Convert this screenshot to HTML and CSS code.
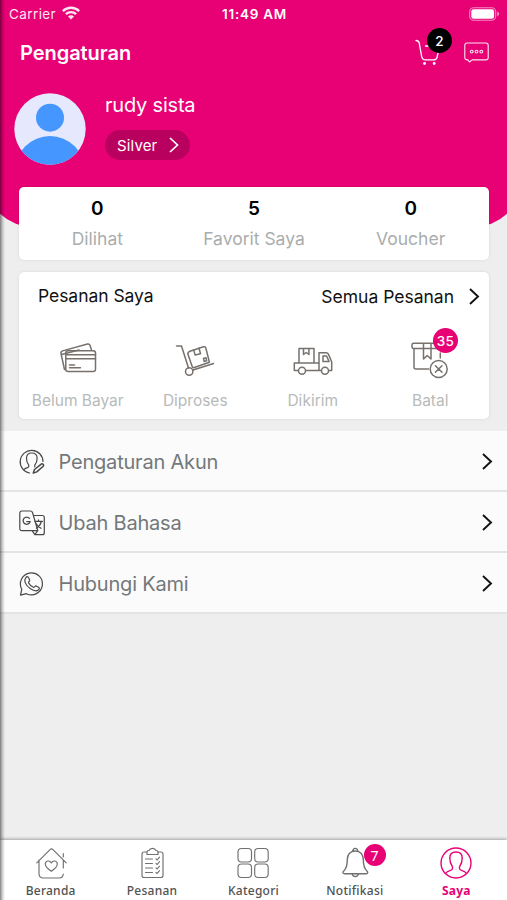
FILE: index.html
```html
<!DOCTYPE html>
<html lang="id">
<head>
<meta charset="utf-8">
<meta name="viewport" content="width=device-width">
<title>Pengaturan</title>
<link rel="stylesheet" href="styles.css">
</head>
<body>
<div class="app">
  <header class="hero">
    <div class="status">
      <div class="carrier"><span>Carrier</span>
        <svg width="18" height="14" viewBox="0 0 18 14"><g fill="none" stroke="#fff" stroke-width="2.4"><path d="M.8 5.1a11.6 11.6 0 0 1 16.4 0"/><path d="M3.9 8.2a7.2 7.2 0 0 1 10.2 0"/></g><path d="M6 10.5a4.2 4.2 0 0 1 6 0L9 13.6z" fill="#fff"/></svg>
      </div>
      <div class="clock">11:49 AM</div>
      <svg class="battery" width="31" height="14" viewBox="0 0 31 14"><rect x=".7" y=".7" width="26" height="12.6" rx="4" fill="none" stroke="#fff" stroke-opacity=".55" stroke-width="1.1"/><rect x="2.3" y="2.3" width="22.8" height="9.4" rx="2.3" fill="#fff"/><path d="M28.3 4.6c2.4 1 2.4 3.8 0 4.8z" fill="#fff" opacity=".6"/></svg>
    </div>
    <div class="titlebar">
      <h1>Pengaturan</h1>
      <div class="tools">
        <div class="cart">
          <svg width="26" height="28" viewBox="0 0 26 28" fill="none" stroke="#fff" stroke-width="1.3" stroke-linecap="round"><path d="M1 1.5c2 0 2.700.7 3.200 2.400l2.500 13.800c.5 2.100 1.500 3.200 3.400 3.200h8.600c2 0 2.800-.8 3.400-2.700L24.500 7M10.500 7h8"/><circle cx="9.5" cy="24.500" r="1.4" fill="#fff" stroke="none"/><circle cx="19.200" cy="24.500" r="1.4" fill="#fff" stroke="none"/></svg>
          <span class="badge badge-dark">2</span>
        </div>
        <svg width="25" height="22" viewBox="0 0 25 22" fill="none" stroke="#fff" stroke-width="1.1" stroke-opacity=".9"><path d="M3.200 1h18.600q2.400 0 2.400 2.400v12.100q0 2.400-2.400 2.400H8.200L5.700 20l-2-2.100Q.8 17.900.8 15.500V3.400Q.8 1 3.200 1z"/><circle cx="7.7" cy="9.6" r="1.4"/><circle cx="12.5" cy="9.6" r="1.4"/><circle cx="17.3" cy="9.6" r="1.4"/></svg>
      </div>
    </div>
    <div class="profile">
      <svg width="72" height="72" viewBox="0 0 72 72"><defs><clipPath id="face"><circle cx="36" cy="36" r="35.7"/></clipPath></defs><g clip-path="url(#face)"><path fill="#e6e9fd" d="M0 0h72v72H0z"/><circle cx="36" cy="24.7" r="14" fill="#4597ff"/><circle cx="36" cy="78" r="35" fill="#4597ff"/></g></svg>
      <div>
        <div class="name">rudy sista</div>
        <div class="tier"><span>Silver</span><svg width="10" height="16" viewBox="0 0 10 16" fill="none" stroke="#fff" stroke-width="1.7"><path d="m1 1 7.500 7L1 15"/></svg></div>
      </div>
    </div>
  </header>

  <main>
    <section class="card stats">
      <div><b>0</b><span>Dilihat</span></div>
      <div><b>5</b><span>Favorit Saya</span></div>
      <div><b>0</b><span>Voucher</span></div>
    </section>

    <section class="card orders">
      <div class="orders-head">
        <h2>Pesanan Saya</h2>
        <div class="all"><span>Semua Pesanan</span><svg width="11" height="17" viewBox="0 0 11 17" fill="none" stroke="#111" stroke-width="1.9"><path d="m1 1 8 7.500-8 7.500"/></svg></div>
      </div>
      <div class="steps">
        <div class="step">
          <svg width="40" height="40" viewBox="0 0 40 40"><path d="m6.500 27.500-3.500-16q-.4-2 1.600-2.600L29.500 2q2-.4 2.600 1.500L33.500 8M3.500 12.500 21 8"/><rect x="7.800" y="8.700" width="29.700" height="20.800" rx="2.300"/><path d="M8 12.700h29.500M8 16.700h29.500M11.500 23h5M11.500 25.700h11"/></svg>
          <span>Belum Bayar</span>
        </div>
        <div class="step">
          <svg width="40" height="40" viewBox="0 0 40 40"><path d="M1.500 4h5l7 22M18 28l20.500-6.500"/><circle cx="14.200" cy="29.500" r="3.700"/><path d="m12.700 11.500 1.500-2L28.500 4.800q2-.5 2.400 1.400l3.500 14-15.800 5.500q-1 0-1.500-1.400z"/><path d="m18.700 8.100 1.500 5 5.300-1.400L24 6.200M28.500 16.500l2.500-.7.700 3-2.500.7z"/></svg>
          <span>Diproses</span>
        </div>
        <div class="step">
          <svg width="40" height="40" viewBox="0 0 40 40"><path d="M6 20.500V6.500h15v14M10.500 6.500v6l2.700-2 2.700 2v-6M5 28.500H1.300V21H26V10.700h7q1.800 0 2.500 1.700l3.200 7.400v8.700H36M26 21v7.500M13 28.500h15"/><path d="M30 14h3.600l2.500 5.600H30z"/><circle cx="9" cy="28.700" r="3.500"/><circle cx="32" cy="28.700" r="3.500"/></svg>
          <span>Dikirim</span>
        </div>
        <div class="step">
          <svg width="40" height="40" viewBox="0 0 40 40"><path d="M4 6.500h-.5Q2 6.500 2 5V2.700q0-1.500 1.500-1.500h26v5.300zM4 6.500V25q0 2 2 2h12.500M13.500 1.500V17l3.700-3.500L21 17V1.500M30.300 11v5"/><circle cx="28.700" cy="27" r="8.500"/><path d="m25.400 23.700 6.600 6.600m0-6.600-6.600 6.600"/></svg>
          <i class="badge badge-count">35</i>
          <span>Batal</span>
        </div>
      </div>
    </section>

    <nav class="menu">
      <div class="row">
        <svg class="ico" width="26" height="26" viewBox="0 0 26 26"><path d="M15.500 20.500l-1.200 3.600 3.500-1.200 6.400-5.700q.8-1.200-.3-2.100-1.100-.7-2 .2z" stroke-width="1.5"/><path d="M24 12.500A11.400 11.400 0 1 0 10.600 24M5 20.400q1.300-1.200 3.500-1.800c1.600-.5 1.600-2 .9-3.200C7.900 13.600 7.500 11.800 7.500 9.200c0-3.200 2.200-5.200 5.300-5.200s5.300 2 5.300 5.200c0 2.600-.4 4.400-1.900 6.200-.6 1-.8 1.800-.4 2.400"/></svg>
        <span>Pengaturan Akun</span>
        <svg class="chev" width="11" height="17" viewBox="0 0 11 17"><path d="m1 1 8 7.500-8 7.500"/></svg>
      </div>
      <div class="row">
        <svg class="ico" width="26" height="26" viewBox="0 0 26 26"><path d="M3 1h8.500q1.500 0 2 1.500l5.300 18.200H3Q.8 20.700.8 18.500V3.200Q.8 1 3 1zM14.400 5.500h8.900q2 0 2 2v15.200q0 2-2 2h-7.500l-2.700-4M15.800 24.700l3-4"/><path d="M10.500 8.400a3.600 3.600 0 1 0 .7 3.200H7.800" stroke-width="1.3"/><path d="M15.800 11.300h7.700M19.500 10v1.300M22.300 11.600c-.7 3-2.200 5-4.800 6.500M17 13.500c1 2 2.600 3.500 5 4.800" stroke-width="1.3"/></svg>
        <span>Ubah Bahasa</span>
        <svg class="chev" width="11" height="17" viewBox="0 0 11 17"><path d="m1 1 8 7.500-8 7.500"/></svg>
      </div>
      <div class="row">
        <svg class="ico" width="26" height="26" viewBox="0 0 26 26"><path d="m1.500 24.200 1.300-6A11 11 0 1 1 7.500 22.700z"/><path d="M6.700 6.800c1-1.500 2.300-1.500 2.900 0l1.100 2.300c.5 1-1.600 1.800-1.200 2.700 1 2.100 2.700 3.600 4.900 4.500 1 .4 1.700-1.800 2.800-1.300l2.300 1.200c1.400.7.8 2.200-.2 2.900-2 1.400-4.900.6-7.800-1.300-2.600-1.700-4.400-3.800-5.300-6.200C5.500 9.500 5.700 8 6.700 6.800z"/></svg>
        <span>Hubungi Kami</span>
        <svg class="chev" width="11" height="17" viewBox="0 0 11 17"><path d="m1 1 8 7.500-8 7.500"/></svg>
      </div>
    </nav>
  </main>

  <footer class="tabs">
    <div class="tab">
      <svg width="34" height="34" viewBox="0 0 34 34"><path d="M5 14v13.500Q5 32 9.500 32H25q3.800 0 4.300-4M29.300 22V14M2.800 16.800 16 3.600q1.500-1.400 3 0l13.200 13.200M29.300 11V7.500"/><path d="M17.300 25.300c-3-2-6-4.300-6-7.200 0-3.600 4.600-4.200 6-1.200 1.400-3 6-2.400 6 1.200 0 2.900-3 5.200-6 7.200z"/></svg>
      <span>Beranda</span>
    </div>
    <div class="tab">
      <svg width="34" height="34" viewBox="0 0 34 34"><path d="M12 6H9Q7 6 7 8v21.500q0 2 2 2h17q2 0 2-2V8q0-2-2-2h-3"/><path d="M12 8.500V6q0-1.500 2-1.500.8-2.200 3.500-2.200T21 4.500q2 0 2 1.500v2.500zM10.500 13h7M10.500 17.500h7M10.500 22h7M10.500 26.500h7M21 12.800l1.200 1.200 2.300-2.800M21 17.300l1.200 1.200 2.300-2.800M21 21.800l1.200 1.200 2.300-2.800M21 26.300l1.200 1.200 2.300-2.800"/></svg>
      <span>Pesanan</span>
    </div>
    <div class="tab">
      <svg width="34" height="34" viewBox="0 0 34 34"><rect x="2" y="2.5" width="13.5" height="13.5" rx="3.5"/><rect x="18.7" y="2.5" width="13.5" height="13.5" rx="3.5"/><rect x="2" y="18" width="13.5" height="13.5" rx="3.5"/><rect x="18.7" y="18" width="13.5" height="13.5" rx="3.5"/></svg>
      <span>Kategori</span>
    </div>
    <div class="tab">
      <svg width="34" height="34" viewBox="0 0 34 34"><path d="M15 5.500a2.400 2.400 0 1 1 4.600 0M17.300 5c-5.300 0-8 4-8 8.500 0 6.500-.8 9-3.500 11.500-1.500 1.300-1 2.800.8 2.800h21.500c1.800 0 2.200-1.500.8-2.800-2.800-2.500-3.600-5-3.600-11.500 0-4.500-2.700-8.500-8-8.500zM14.200 28c.4 3.300 5.700 3.300 6.200 0" stroke-width="1.4"/></svg>
      <i class="badge badge-tab">7</i>
      <span>Notifikasi</span>
    </div>
    <div class="tab active">
      <svg width="34" height="34" viewBox="0 0 34 34"><circle cx="17" cy="17" r="15"/><path d="M6.500 27.500c1.200-2 3-2.600 5-3.200 2.200-.8 2.600-2.200 1.600-4.300-1.500-2-2.300-4.500-2.300-8C10.800 8 13 6 17 6s6.200 2 6.200 6c0 3.500-.8 6-2.300 8-1 2.100-.6 3.500 1.600 4.300 2 .6 3.800 1.200 5 3.200"/></svg>
      <span>Saya</span>
    </div>
  </footer>
</div>
</body>
</html>
```
FILE: styles.css
```css
* { box-sizing: border-box; }
body { margin: 0; font-family: Inter, "Liberation Sans", sans-serif; background: #eee; }
h1, h2 { margin: 0; }
svg { display: block; flex: none; }

.app {
  position: relative;
  height: 900px;
  overflow: hidden;
  display: flex;
  flex-direction: column;
  background: #eee;
}
/* soft shade along the left screen edge */
.app::after {
  content: "";
  position: absolute;
  inset: 0 auto 0 0;
  width: 5px;
  background: linear-gradient(90deg, rgba(0,0,0,.48), rgba(0,0,0,.18) 50%, transparent);
}

.hero {
  flex: none;
  height: 227px;
  margin: 0 -16px;
  padding: 0 16px;
  background: #e80075;
  border-radius: 0 0 50px 50px;
  color: #fff;
}
.status {
  display: grid;
  grid-template-columns: 1fr auto 1fr;
  align-items: center;
  height: 27px;
  padding: 0 7px 0 9px;
  font-size: 13.5px;
  line-height: 27px;
}
.carrier { display: flex; align-items: center; gap: 6px; letter-spacing: .4px; opacity: .9; }
.carrier span { padding-top: 1px; }
.carrier svg { margin-top: -2px; }
.clock { font-weight: 600; font-size: 13.5px; letter-spacing: .75px; padding-top: 1px; }
.battery { justify-self: end; }

.titlebar {
  display: flex;
  justify-content: space-between;
  height: 52px;
  padding: 0 18px 0 20px;
}
.titlebar h1 { font-size: 20px; font-weight: 600; line-height: 53px; letter-spacing: -.05px; }
.tools { display: flex; align-items: center; gap: 23px; }
.cart { position: relative; }
.badge {
  position: absolute;
  display: flex;
  align-items: center;
  justify-content: center;
  border-radius: 50%;
  color: #fff;
  font-style: normal;
}
.badge-dark { left: 12px; top: -11px; width: 25px; height: 25px; background: #000; font-size: 13.5px; font-weight: 500; }

.profile { display: flex; gap: 19px; padding: 14px 14px 0; }
.name { font-size: 20px; line-height: 25px; letter-spacing: -.2px; }
.tier {
  display: flex;
  align-items: center;
  gap: 12px;
  width: 85px;
  height: 30px;
  margin-top: 12px;
  padding-left: 12px;
  border-radius: 15px;
  background: #ba005f;
  font-size: 15px;
  letter-spacing: .15px;
}

main { flex: 1; margin-top: -40px; }
.card {
  margin: 0 18px 12px 19px;
  background: #fff;
  border-radius: 5px;
  box-shadow: 0 0 3px rgba(0,0,0,.1);
}
.stats { display: grid; grid-template-columns: repeat(3, 1fr); height: 73px; padding-top: 7px; text-align: center; }
.stats b { display: block; font-size: 19px; font-weight: 600; line-height: 29px; }
.stats span { display: block; font-size: 17.5px; line-height: 31px; color: #a9adad; }

.orders { height: 147px; }
.orders-head { display: flex; justify-content: space-between; align-items: center; height: 48px; padding: 0 9px 0 19px; color: #111; }
.orders-head h2 { font-size: 17.5px; font-weight: 400; letter-spacing: -.05px; margin-top: -1px; }
.all { display: flex; align-items: center; gap: 15px; font-size: 17.5px; }
.steps { display: grid; grid-template-columns: repeat(4, 1fr); padding-top: 22px; }
.step { position: relative; display: flex; flex-direction: column; align-items: center; }
.step svg { fill: none; stroke: #77716d; stroke-width: 1.5; stroke-linejoin: round; stroke-linecap: round; }
.step span { margin-top: 9px; font-size: 15.5px; line-height: 20px; color: #b7bab9; }
.badge-count { right: 31px; top: -14px; width: 25px; height: 25px; background: #e80075; font-size: 13.5px; font-weight: 500; letter-spacing: .3px; }

.menu { margin-top: 12px; }
.row {
  display: flex;
  align-items: center;
  height: 61px;
  padding: 2px 14px 0 19px;
  background: #fbfbfb;
  border-bottom: 2px solid #e4e4e4;
  font-size: 20px;
  letter-spacing: -.2px;
  color: #73787a;
}
.row span { flex: 1; margin-left: 13.5px; }
.ico { fill: none; stroke: #484848; stroke-width: 1.2; stroke-linejoin: round; stroke-linecap: round; }
.chev { fill: none; stroke: #111; stroke-width: 1.9; }

.tabs {
  flex: none;
  display: grid;
  grid-template-columns: repeat(5, 1fr);
  height: 60px;
  padding-top: 6px;
  background: #fff;
  box-shadow: 0 -1px 3px rgba(0,0,0,.32);
  font-family: "Noto Sans", "Open Sans", sans-serif;
}
.tab { position: relative; display: flex; flex-direction: column; align-items: center; color: #515151; }
.tab svg { fill: none; stroke: #707070; stroke-width: 1.15; stroke-linejoin: round; stroke-linecap: round; }
.tab span { margin-top: 2px; font-size: 12px; font-weight: 500; line-height: 17px; letter-spacing: .25px; }
.active { color: #e80075; }
.active svg { stroke: #e80075; stroke-width: 1.4; }
.active span { font-weight: 700; }
.badge-tab { right: 20px; top: -2px; width: 22px; height: 22px; background: #e80075; font-size: 14px; }
```
